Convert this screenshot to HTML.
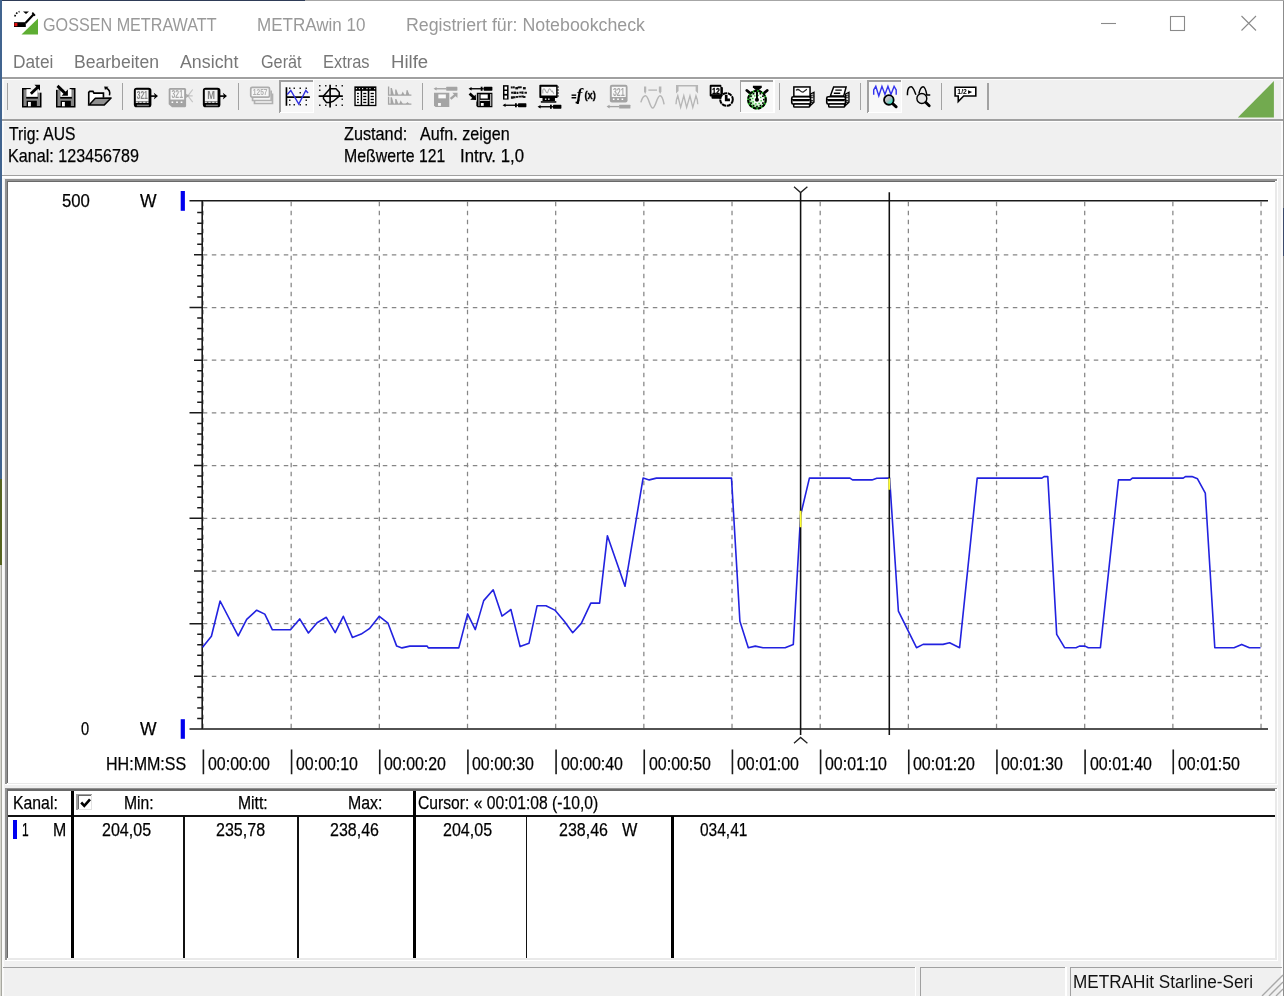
<!DOCTYPE html>
<html><head><meta charset="utf-8"><title>METRAwin 10</title>
<style>
html,body{margin:0;padding:0}
body{width:1284px;height:996px;position:relative;overflow:hidden;background:#f0f0f0;font-family:"Liberation Sans",sans-serif}
.t{position:absolute;white-space:pre;line-height:normal;transform-origin:0 0;font-family:"Liberation Sans",sans-serif}
.ms{filter:blur(0.3px);-webkit-text-stroke:0.25px #000}
.a{position:absolute}
svg{position:absolute;overflow:visible}
</style></head><body>
<div class="a" style="left:2px;top:1px;width:1281px;height:76px;background:#fff;"></div>
<div class="a" style="left:0px;top:0px;width:305px;height:1px;background:#2e3b57;"></div>
<div class="a" style="left:305px;top:0px;width:979px;height:1px;background:#a6a6a6;"></div>
<div class="a" style="left:0px;top:0px;width:2px;height:479px;background:#41648f;"></div>
<div class="a" style="left:0px;top:479px;width:2px;height:86px;background:#56631f;"></div>
<div class="a" style="left:0px;top:565px;width:2px;height:431px;background:#d6d6ce;"></div>
<div class="a" style="left:1.3px;top:565px;width:0.7px;height:431px;background:#a8a8a0;"></div>
<div class="a" style="left:2px;top:77px;width:1.5px;height:919px;background:#fafafa;"></div>
<div class="a" style="left:1282.6px;top:1px;width:1.4px;height:995px;background:#8c8c8c;"></div>
<div class="a" style="left:1283px;top:208px;width:1px;height:48px;background:#3c4a6a;"></div>
<div class="a" style="left:1281.3px;top:77px;width:1.3px;height:919px;background:#fbfbfb;"></div>
<div class="a" style="left:2px;top:77px;width:1280.6px;height:1.5px;background:#a0a0a0;"></div>
<div class="a" style="left:2px;top:78.5px;width:1280.6px;height:1.5px;background:#fff;"></div>
<div class="a" style="left:2px;top:119px;width:1280.6px;height:1.5px;background:#a0a0a0;"></div>
<div class="a" style="left:2px;top:120.5px;width:1280.6px;height:1.5px;background:#fff;"></div>
<div class="a" style="left:2px;top:174.5px;width:1280.6px;height:1.5px;background:#a0a0a0;"></div>
<div class="a" style="left:2px;top:176px;width:1280.6px;height:1.5px;background:#fff;"></div>
<div class="a" style="left:5.3px;top:179.4px;width:1272.7px;height:606.1px;background:#fff;"></div>
<div class="a" style="left:5.3px;top:179.4px;width:1271.3px;height:1.3px;background:#929292;"></div>
<div class="a" style="left:5.3px;top:179.4px;width:1.3px;height:604.7px;background:#929292;"></div>
<div class="a" style="left:6.5px;top:180.6px;width:1268.8px;height:1.4px;background:#696969;"></div>
<div class="a" style="left:6.5px;top:180.6px;width:1.4px;height:602.2px;background:#696969;"></div>
<div class="a" style="left:7.9px;top:782.5px;width:1268.7px;height:1.5px;background:#e9e9e9;"></div>
<div class="a" style="left:1275px;top:182.0px;width:1.5px;height:602.1px;background:#e9e9e9;"></div>
<div class="a" style="left:5.3px;top:788px;width:1272.7px;height:173.20000000000005px;background:#fff;"></div>
<div class="a" style="left:5.3px;top:788px;width:1271.3px;height:1.3px;background:#929292;"></div>
<div class="a" style="left:5.3px;top:788px;width:1.3px;height:171.80000000000004px;background:#929292;"></div>
<div class="a" style="left:6.5px;top:789.2px;width:1268.8px;height:1.4px;background:#696969;"></div>
<div class="a" style="left:6.5px;top:789.2px;width:1.4px;height:169.30000000000004px;background:#696969;"></div>
<div class="a" style="left:7.9px;top:958.2px;width:1268.7px;height:1.5px;background:#e9e9e9;"></div>
<div class="a" style="left:1275px;top:790.6px;width:1.5px;height:169.20000000000005px;background:#e9e9e9;"></div>
<div class="a" style="left:8px;top:815.0px;width:1267.2px;height:1.6px;background:#111;"></div>
<div class="a" style="left:70.5px;top:790.6px;width:3px;height:167.39999999999998px;background:#000;"></div>
<div class="a" style="left:412.7px;top:790.6px;width:3px;height:167.39999999999998px;background:#000;"></div>
<div class="a" style="left:183.39999999999998px;top:816px;width:1.6px;height:142px;background:#111;"></div>
<div class="a" style="left:297.2px;top:816px;width:1.6px;height:142px;background:#111;"></div>
<div class="a" style="left:525.5px;top:816px;width:1.6px;height:142px;background:#111;"></div>
<div class="a" style="left:671.0px;top:816px;width:2.6px;height:142px;background:#000;"></div>
<div class="a" style="left:12.7px;top:820px;width:4px;height:18.6px;background:#0000f0;filter:blur(0.3px)"></div>
<div class="a" style="left:76.3px;top:793.5px;width:15.7px;height:16.7px;background:#fff;"></div>
<div class="a" style="left:76.3px;top:793.5px;width:15.7px;height:1.5px;background:#a0a0a0;"></div>
<div class="a" style="left:76.3px;top:793.5px;width:1.5px;height:16.7px;background:#a0a0a0;"></div>
<div class="a" style="left:77.8px;top:795px;width:14px;height:1.2px;background:#696969;"></div>
<div class="a" style="left:77.8px;top:795px;width:1.2px;height:15px;background:#696969;"></div>
<div class="a" style="left:77.8px;top:808.8px;width:14.2px;height:1.4px;background:#e3e3e3;"></div>
<div class="a" style="left:90.6px;top:795px;width:1.4px;height:15px;background:#e3e3e3;"></div>
<svg style="left:76.5px;top:794.6px;filter:blur(0.3px)" width="16" height="17" viewBox="0 0 16 17"><path d="M4.2 7.5 L7.3 10.8 L13 4.4" fill="none" stroke="#000" stroke-width="2.6"/></svg>
<div class="a" style="left:3px;top:967px;width:911.8px;height:1.4px;background:#a0a0a0;"></div>
<div class="a" style="left:920px;top:967px;width:145px;height:1.4px;background:#a0a0a0;"></div>
<div class="a" style="left:1069.9px;top:967px;width:212.5999999999999px;height:1.4px;background:#a0a0a0;"></div>
<div class="a" style="left:920px;top:967px;width:1.4px;height:29px;background:#a0a0a0;"></div>
<div class="a" style="left:1069.9px;top:967px;width:1.4px;height:29px;background:#a0a0a0;"></div>
<div class="a" style="left:914.8px;top:967px;width:1.6px;height:29px;background:#fff;"></div>
<div class="a" style="left:1065px;top:967px;width:1.6px;height:29px;background:#fff;"></div>
<svg style="left:1258px;top:974px" width="26" height="22" viewBox="0 0 26 22"><g stroke="#a8a8a8" stroke-width="1.4"><path d="M4 22 L25 1 M11 22 L25 8 M18 22 L25 15"/></g></svg>
<svg style="left:1090px;top:8px" width="180" height="32" viewBox="0 0 180 32"><g stroke="#8a8a8a" stroke-width="1.1" fill="none"><path d="M11 15.5 H26"/><rect x="80.5" y="8.5" width="14" height="14"/><path d="M151.5 8 L166 22.5 M166 8 L151.5 22.5"/></g></svg>
<svg style="left:12px;top:8px" width="30" height="30" viewBox="0 0 30 30">
<polygon points="26,10.5 26,26.5 9.5,26.5" fill="#5eae33"/>
<path d="M2.8 8.5 C3.5 5.5 6 4 7.5 3.6" fill="none" stroke="#000" stroke-width="1.6" stroke-dasharray="1.6 1.4"/>
<path d="M11 3.5 H17 L14 6 Z" fill="#000"/>
<path d="M21.5 6.5 L13.5 15" stroke="#000" stroke-width="2.2" fill="none"/>
<path d="M20.3 4.6 L23 7.6" stroke="#000" stroke-width="1.6" fill="none"/>
<rect x="2" y="14.2" width="11.8" height="4.8" fill="#000"/>
<rect x="2.4" y="15" width="3" height="3.2" fill="#e01010"/>
</svg>
<svg style="left:0;top:0" width="1284" height="996" viewBox="0 0 1284 996">
<path d="M202.8 254.80 H1268 M202.8 307.50 H1268 M202.8 360.20 H1268 M202.8 412.90 H1268 M202.8 465.60 H1268 M202.8 518.30 H1268 M202.8 571.00 H1268 M202.8 623.70 H1268 M202.8 676.40 H1268" stroke="#868686" stroke-width="1.25" stroke-dasharray="4.5 4.5" fill="none"/>
<path d="M203.00 201.7 V729.0 M291.17 201.7 V729.0 M379.34 201.7 V729.0 M467.51 201.7 V729.0 M555.68 201.7 V729.0 M643.85 201.7 V729.0 M732.02 201.7 V729.0 M820.19 201.7 V729.0 M908.36 201.7 V729.0 M996.53 201.7 V729.0 M1084.70 201.7 V729.0 M1172.87 201.7 V729.0 M1261.04 201.7 V729.0" stroke="#868686" stroke-width="1.25" stroke-dasharray="4.5 4.5" fill="none"/>
<path d="M189.5 200.8 H1268 M189.5 729.0 H1268 M202.2 200.8 V729.0" stroke="#1a1a1a" stroke-width="1.6" fill="none"/>
<path d="M197.2 212.59 H202.2 M197.2 223.13 H202.2 M197.2 233.67 H202.2 M197.2 244.21 H202.2 M194 254.75 H202.2 M197.2 265.29 H202.2 M197.2 275.83 H202.2 M197.2 286.37 H202.2 M197.2 296.91 H202.2 M189.5 307.45 H202.2 M197.2 317.99 H202.2 M197.2 328.53 H202.2 M197.2 339.07 H202.2 M197.2 349.61 H202.2 M194 360.15 H202.2 M197.2 370.69 H202.2 M197.2 381.23 H202.2 M197.2 391.77 H202.2 M197.2 402.31 H202.2 M189.5 412.85 H202.2 M197.2 423.39 H202.2 M197.2 433.93 H202.2 M197.2 444.47 H202.2 M197.2 455.01 H202.2 M194 465.55 H202.2 M197.2 476.09 H202.2 M197.2 486.63 H202.2 M197.2 497.17 H202.2 M197.2 507.71 H202.2 M189.5 518.25 H202.2 M197.2 528.79 H202.2 M197.2 539.33 H202.2 M197.2 549.87 H202.2 M197.2 560.41 H202.2 M194 570.95 H202.2 M197.2 581.49 H202.2 M197.2 592.03 H202.2 M197.2 602.57 H202.2 M197.2 613.11 H202.2 M189.5 623.65 H202.2 M197.2 634.19 H202.2 M197.2 644.73 H202.2 M197.2 655.27 H202.2 M197.2 665.81 H202.2 M194 676.35 H202.2 M197.2 686.89 H202.2 M197.2 697.43 H202.2 M197.2 707.97 H202.2 M197.2 718.51 H202.2" stroke="#1a1a1a" stroke-width="1.5" fill="none"/>
<path d="M203.40 749.6 V774.2 M291.57 749.6 V774.2 M379.74 749.6 V774.2 M467.91 749.6 V774.2 M556.08 749.6 V774.2 M644.25 749.6 V774.2 M732.42 749.6 V774.2 M820.59 749.6 V774.2 M908.76 749.6 V774.2 M996.93 749.6 V774.2 M1085.10 749.6 V774.2 M1173.27 749.6 V774.2" stroke="#1a1a1a" stroke-width="1.6" fill="none"/>
<rect x="180.7" y="191" width="4.2" height="19.8" fill="#0000ee"/><rect x="180.7" y="719.2" width="4.2" height="19.6" fill="#0000ee"/>
<polyline points="202.6,647.2 211.4,636.3 220.1,601 238.2,635.9 246.7,619.3 256.7,610.2 264.8,614.1 272.4,629.8 290.5,629.8 299.7,618.9 308.4,633 317.1,622.8 326.3,617.3 335.2,632.6 343.3,616.3 352.4,637.4 361.2,634.1 369.4,628.7 379.3,616.3 388,623.2 396.7,646.1 402,647.9 409.8,646.1 427.2,646.1 428.3,647.9 458.8,647.9 467.6,613.9 475.3,629.6 483.7,600.6 493.2,589.8 502,616.1 510.9,609.5 520.1,646.6 529,643.3 537.1,605.7 546,605.7 554.8,610.1 564.3,621.2 572.7,632.7 581.3,623.4 590.8,603.1 599.6,603.1 607.4,535.7 625,586.3 643.1,478.1 649.3,479.9 656.4,478.1 731.5,478.1 739.9,621.2 748.3,647.7 755.3,646.1 763,647.7 785.1,647.7 793.3,644.4 800.6,515.2 809.4,478.1 850,478.1 852.5,479.9 872,479.9 876.8,478.3 889.6,478.1 898.4,611.2 916.5,647.7 923.1,644.4 943,644.4 949.6,642.8 959.6,647.7 977.2,478.1 1041.9,478.1 1044.1,476.6 1047.8,476.6 1056.7,634.4 1064.6,647.7 1076,647.7 1079.4,646.1 1085,646.1 1088.3,647.7 1100.4,647.7 1118.5,479.9 1130.2,479.9 1132.4,478.1 1183.2,478.1 1185.4,476.6 1192,476.6 1197.5,478.8 1205.3,493.1 1214.8,647.7 1234,647.7 1241.7,644.4 1249.4,647.7 1260.5,647.7" fill="none" stroke="#2222e0" stroke-width="1.6" stroke-linejoin="round"/>
<path d="M800.6 192.6 V735 M889.3 192.3 V735" stroke="#111" stroke-width="1.55" fill="none"/>
<path d="M794 186.7 L800.6 192.6 L807.4 186.7 M794 743.2 L800.6 737.4 L807.4 743.2" stroke="#222" stroke-width="1.3" fill="none"/>
<path d="M800.6 510.8 V527.3 M889.3 478.6 V489.8" stroke="#ffff30" stroke-width="1.9" fill="none"/>
</svg>
<div class="a" style="left:6.55px;top:83.4px;width:1.3px;height:26.4px;background:#a2a2a2"></div>
<div class="a" style="left:121.95px;top:83.4px;width:1.3px;height:26.4px;background:#a2a2a2"></div>
<div class="a" style="left:237.65px;top:83.4px;width:1.3px;height:26.4px;background:#a2a2a2"></div>
<div class="a" style="left:421.85px;top:83.4px;width:1.3px;height:26.4px;background:#a2a2a2"></div>
<div class="a" style="left:778.95px;top:83.4px;width:1.3px;height:26.4px;background:#a2a2a2"></div>
<div class="a" style="left:859.95px;top:83.4px;width:1.3px;height:26.4px;background:#a2a2a2"></div>
<div class="a" style="left:940.95px;top:83.4px;width:1.3px;height:26.4px;background:#a2a2a2"></div>
<div class="a" style="left:987.45px;top:83.4px;width:1.3px;height:26.4px;background:#a2a2a2"></div>
<div class="a" style="left:279.80px;top:80.3px;width:34.3px;height:32.5px;background:#f8f8f8"></div>
<div class="a" style="left:279.30px;top:80.2px;width:1.5px;height:32.6px;background:#a0a0a0"></div>
<div class="a" style="left:279.30px;top:80.4px;width:33.5px;height:1.2px;background:#a0a0a0"></div>
<div class="a" style="left:312.80px;top:80.3px;width:1.4px;height:32.6px;background:#fff"></div>
<div class="a" style="left:279.80px;top:111.6px;width:34.3px;height:1.4px;background:#fff"></div>
<div class="a" style="left:867.80px;top:80.3px;width:34.3px;height:32.5px;background:#f8f8f8"></div>
<div class="a" style="left:867.30px;top:80.2px;width:1.5px;height:32.6px;background:#a0a0a0"></div>
<div class="a" style="left:867.30px;top:80.4px;width:33.5px;height:1.2px;background:#a0a0a0"></div>
<div class="a" style="left:900.80px;top:80.3px;width:1.4px;height:32.6px;background:#fff"></div>
<div class="a" style="left:867.80px;top:111.6px;width:34.3px;height:1.4px;background:#fff"></div>
<div class="a" style="left:740.30px;top:80.3px;width:34.3px;height:32.5px;background:#f8f8f8"></div>
<div class="a" style="left:739.80px;top:80.2px;width:1.5px;height:32.6px;background:#a0a0a0"></div>
<div class="a" style="left:739.80px;top:80.4px;width:33.5px;height:1.2px;background:#a0a0a0"></div>
<div class="a" style="left:773.30px;top:80.3px;width:1.4px;height:32.6px;background:#fff"></div>
<div class="a" style="left:740.30px;top:111.6px;width:34.3px;height:1.4px;background:#fff"></div>
<svg style="left:1230px;top:78px" width="50" height="42" viewBox="0 0 50 42"><polygon points="7.8,39.4 43.9,39.4 43.9,3" fill="#72aa4f"/></svg>
<svg style="left:18.80px;top:84.50px;filter:blur(0.35px)" width="24" height="22.5" viewBox="0 0 16 15"><rect x="2" y="2" width="13" height="13" fill="#000"/><rect x="3" y="3" width="11" height="11" fill="#858585"/><rect x="5" y="2.8" width="7.3" height="5.2" fill="#fff"/><rect x="4.8" y="7.9" width="7.8" height="1.2" fill="#000"/><rect x="5.1" y="10.5" width="6.8" height="3.8" fill="#000"/><rect x="6" y="11.3" width="1.9" height="2.9" fill="#fff"/><rect x="7.8" y="1.5" width="8" height="1.4" fill="#f0f0f0"/><rect x="12.4" y="1.5" width="3" height="3.6" fill="#f0f0f0"/><path d="M7.9 5.9 L12.3 1.6" stroke="#000" stroke-width="1.9"/><polygon points="14,-0.1 10.3,-0.1 14,3.9" fill="#000"/></svg>
<svg style="left:53.30px;top:84.50px;filter:blur(0.35px)" width="24" height="22.5" viewBox="0 0 16 15"><rect x="2" y="2" width="13" height="13" fill="#000"/><rect x="3" y="3" width="11" height="11" fill="#858585"/><rect x="5" y="2.8" width="7.3" height="5.2" fill="#fff"/><rect x="4.8" y="7.9" width="7.8" height="1.2" fill="#000"/><rect x="5.1" y="10.5" width="6.8" height="3.8" fill="#000"/><rect x="6" y="11.3" width="1.9" height="2.9" fill="#fff"/><rect x="1.5" y="1.5" width="9.6" height="1.5" fill="#f0f0f0"/><rect x="1.5" y="1.5" width="2" height="1.6" fill="#f0f0f0"/><path d="M3 0.6 L8 5.4" stroke="#000" stroke-width="1.9"/><polygon points="9.9,7.1 5.7,7.1 9.9,3" fill="#000"/></svg>
<svg style="left:87.80px;top:84.50px;filter:blur(0.35px)" width="24" height="22.5" viewBox="0 0 16 15"><polygon points="0.5,4.6 3.5,4.6 4.1,5.6 10.3,5.6 10.3,8.8 4.7,8.9 0.5,13" fill="#fff"/><path d="M0.5 13.2 V4.9 L1.2 4.2 H3.3 L4 5.4 H10.3 V8.5" fill="none" stroke="#000" stroke-width="1.1"/><polygon points="1.2,12.9 4.9,8.9 15.4,8.7 10.7,13.4 0.3,13.4" fill="#909090" stroke="#000" stroke-width="1" stroke-linejoin="round"/><path d="M14.3 6.9 C14.9 4.6 13.8 2.9 12.2 2.2" fill="none" stroke="#000" stroke-width="1"/><polygon points="10.8,1 13.7,1.2 11.3,3.4" fill="#000"/></svg>
<svg style="left:134.30px;top:84.50px;filter:blur(0.35px)" width="24" height="22.5" viewBox="0 0 16 15"><rect x="-0.1" y="1.9" width="11.7" height="13" rx="1.9" fill="#000"/><rect x="1.2" y="3.2" width="8.5" height="7.6" fill="#f4f4f4"/><text x="5.5" y="9.4" font-family="Liberation Sans,sans-serif" font-size="7.2" text-anchor="middle" font-weight="bold" fill="#868686" textLength="7.4" lengthAdjust="spacingAndGlyphs">321</text><rect x="1.2" y="10.9" width="8.5" height="1.1" fill="#d8d8d8"/><rect x="2.6" y="11.1" width="1" height="0.8" fill="#555"/><rect x="5.1" y="11.1" width="1" height="0.8" fill="#555"/><rect x="7.6" y="11.1" width="1" height="0.8" fill="#555"/><rect x="1.9" y="13.1" width="8" height="1" fill="#777"/><path d="M11.2 7.4 H15" stroke="#000" stroke-width="1.1"/><polygon points="13.2,5.2 16,7.4 13.2,9.6 14,7.4" fill="#000"/></svg>
<svg style="left:168.80px;top:84.50px;filter:blur(0.35px)" width="24" height="22.5" viewBox="0 0 16 15"><path d="M1.2 2 H10.4 Q11.4 2 11.4 3 V13.9 Q11.4 14.9 10.4 14.9 H2 L-0.2 12.8 V3 Q-0.2 2 0.8 2 Z" fill="#a4a4a4"/><rect x="1" y="3.2" width="9.1" height="6.5" fill="#f8f8f8"/><text x="5.5" y="8.9" font-family="Liberation Sans,sans-serif" font-size="7" text-anchor="middle" font-weight="bold" fill="#a8a8a8" textLength="7.6" lengthAdjust="spacingAndGlyphs">321</text><rect x="1.7" y="11" width="1.1" height="1" fill="#fff"/><rect x="4.8" y="11" width="1.1" height="1" fill="#fff"/><rect x="7.8" y="11" width="1.1" height="1" fill="#fff"/><path d="M15.8 3 L12.6 7.2 L15.8 11.4 M12.6 7.2 H15.8" stroke="#c4c4c4" stroke-width="0.8" fill="none"/><polygon points="11.4,5.8 13.5,7.2 11.4,8.6" fill="#a8a8a8"/></svg>
<svg style="left:203.30px;top:84.50px;filter:blur(0.35px)" width="24" height="22.5" viewBox="0 0 16 15"><rect x="-0.1" y="1.9" width="11.7" height="13" rx="1.9" fill="#000"/><rect x="1.2" y="3.2" width="8.5" height="7.6" fill="#f4f4f4"/><text x="5.5" y="9.4" font-family="Liberation Sans,sans-serif" font-size="7.6" text-anchor="middle" font-weight="bold" fill="#868686" textLength="5.2" lengthAdjust="spacingAndGlyphs">M</text><rect x="1.2" y="10.9" width="8.5" height="1.1" fill="#d8d8d8"/><rect x="2.6" y="11.1" width="1" height="0.8" fill="#555"/><rect x="5.1" y="11.1" width="1" height="0.8" fill="#555"/><rect x="7.6" y="11.1" width="1" height="0.8" fill="#555"/><rect x="1.9" y="13.1" width="8" height="1" fill="#777"/><path d="M11.2 7.4 H15" stroke="#000" stroke-width="1.1"/><polygon points="13.2,5.2 16,7.4 13.2,9.6 14,7.4" fill="#000"/></svg>
<svg style="left:249.80px;top:84.50px;filter:blur(0.35px)" width="24" height="22.5" viewBox="0 0 16 15"><path d="M3 9.6 V12.3 H15 V5.6" stroke="#b0b0b0" stroke-width="1.1" fill="#f4f4f4"/><path d="M1.7 8.4 V10.3 H14.1 V3.6" stroke="#b0b0b0" stroke-width="1.1" fill="#f4f4f4"/><rect x="0.5" y="1.6" width="12.5" height="6.5" rx="0.9" fill="#f6f6f6" stroke="#acacac" stroke-width="1.15"/><text x="6.8" y="6.8" font-family="Liberation Sans,sans-serif" font-weight="bold" font-size="5.6" text-anchor="middle" fill="#b0b0b0" textLength="9.8" lengthAdjust="spacingAndGlyphs">1257</text></svg>
<svg style="left:285.80px;top:86.00px;filter:blur(0.35px)" width="24" height="22.5" viewBox="0 0 16 15"><rect x="2" y="1" width="1" height="1" fill="#222"/><rect x="5" y="1" width="1" height="1" fill="#222"/><rect x="9" y="1" width="1" height="1" fill="#222"/><rect x="13" y="1" width="1" height="1" fill="#222"/><rect x="9" y="4" width="1" height="1" fill="#222"/><rect x="2" y="9" width="1" height="1" fill="#222"/><rect x="13" y="9" width="1" height="1" fill="#222"/><rect x="2" y="12" width="1" height="1" fill="#222"/><rect x="5" y="12" width="1" height="1" fill="#222"/><rect x="9" y="12" width="1" height="1" fill="#222"/><rect x="13" y="12" width="1" height="1" fill="#222"/><path d="M0.3 0.9 V13.1 M0 7.4 H15.9" stroke="#000" stroke-width="1.1" fill="none"/><polyline points="0.8,5.6 3.2,3 8.5,12 13.2,3 14.7,4.7" fill="none" stroke="#3030e0" stroke-width="0.95"/></svg>
<svg style="left:318.80px;top:84.50px;filter:blur(0.35px)" width="24" height="22.5" viewBox="0 0 16 15"><rect x="0" y="0" width="1" height="1" fill="#222"/><rect x="4" y="0" width="1" height="1" fill="#222"/><rect x="11" y="0" width="1" height="1" fill="#222"/><rect x="15" y="0" width="1" height="1" fill="#222"/><rect x="0" y="3" width="1" height="1" fill="#222"/><rect x="15" y="9" width="1" height="1" fill="#222"/><rect x="0" y="13" width="1" height="1" fill="#222"/><rect x="4" y="13" width="1" height="1" fill="#222"/><rect x="11" y="13" width="1" height="1" fill="#222"/><rect x="15" y="13" width="1" height="1" fill="#222"/><path d="M7.4 -0.2 V15 M-0.2 7.4 H15.9" stroke="#000" stroke-width="1.1" fill="none"/><polygon points="3,7.4 7.3,2.5 11.3,2.5 13.5,4.8 13.5,7.4 9.6,10.8 7.3,11.6 5,11.6 3,9.2" fill="none" stroke="#000" stroke-width="1"/></svg>
<svg style="left:353.30px;top:84.50px;filter:blur(0.35px)" width="24" height="22.5" viewBox="0 0 16 15"><rect x="0.9" y="0.9" width="14.7" height="13.2" fill="#000"/><rect x="1.8" y="3.9" width="3.3" height="9.3" fill="#fff"/><rect x="6.1" y="3.9" width="3.7" height="9.3" fill="#fff"/><rect x="10.9" y="3.9" width="3.9" height="9.3" fill="#fff"/><rect x="1.9" y="2" width="0.8" height="0.8" fill="#ddd"/><rect x="3.9" y="2" width="0.8" height="0.8" fill="#ddd"/><rect x="6" y="2" width="0.8" height="0.8" fill="#ddd"/><rect x="8.9" y="2" width="0.8" height="0.8" fill="#ddd"/><rect x="10.9" y="2" width="0.8" height="0.8" fill="#ddd"/><rect x="14" y="2" width="0.8" height="0.8" fill="#ddd"/><rect x="2.7" y="5.2" width="1.2" height="0.9" fill="#000"/><rect x="6.8" y="5.2" width="2.1" height="0.9" fill="#000"/><rect x="11.7" y="5.2" width="2.2" height="0.9" fill="#000"/><rect x="2.7" y="7.2" width="1.2" height="0.9" fill="#000"/><rect x="6.8" y="7.2" width="2.1" height="0.9" fill="#000"/><rect x="11.7" y="7.2" width="2.2" height="0.9" fill="#000"/><rect x="2.7" y="9.2" width="1.2" height="0.9" fill="#000"/><rect x="6.8" y="9.2" width="2.1" height="0.9" fill="#000"/><rect x="11.7" y="9.2" width="2.2" height="0.9" fill="#000"/><rect x="2.7" y="11.2" width="1.2" height="0.9" fill="#000"/><rect x="6.8" y="11.2" width="2.1" height="0.9" fill="#000"/><rect x="11.7" y="11.2" width="2.2" height="0.9" fill="#000"/></svg>
<svg style="left:387.80px;top:84.50px;filter:blur(0.35px)" width="24" height="22.5" viewBox="0 0 16 15"><path d="M0.4 1 V6.7 H15.6 M0.4 7.9 V12.7 H15.6" stroke="#a4a4a4" stroke-width="0.9" fill="none"/><g fill="#a4a4a4"><polygon points="1.7,6.6 1.7,2 2.6,2 3.9,6.6"/><polygon points="4.8,6.6 4.8,3 5.6,3 6.9,6.6"/><polygon points="8.8,6.6 9.8,4.4 11,6.6"/><polygon points="11.9,6.6 12.4,3.4 13,3.4 14.3,6.6"/><polygon points="1.7,12.6 1.7,8.2 2.6,8.2 3.9,12.6"/><polygon points="4.8,12.6 4.8,9.4 5.6,9.4 6.9,12.6"/><polygon points="7.6,12.6 8.4,10.2 9.9,12.6"/><polygon points="11.8,12.6 13,11.4 14.2,12.6"/></g></svg>
<svg style="left:434.30px;top:84.50px;filter:blur(0.35px)" width="24" height="22.5" viewBox="0 0 16 15"><rect x="8.1" y="1.2" width="7.5" height="2.6" rx="0.4" fill="#a4a4a4"/><path d="M1 2.5 H8.1" stroke="#a4a4a4" stroke-width="0.9"/><polygon points="-0.3,2.5 1.7,1.3 1.7,3.7" fill="#a4a4a4"/><path d="M0 5.1 H10.2 V14.6 H1 L0 13.6 Z" fill="#a4a4a4"/><rect x="2.9" y="6.3" width="5" height="2.6" fill="#fafafa"/><rect x="2.7" y="12" width="1.9" height="1.9" fill="#fafafa"/><path d="M11.1 9.3 L14.4 6.4" stroke="#a4a4a4" stroke-width="1.6"/><polygon points="15.7,5.1 12.2,5.2 15.6,8.7" fill="#a4a4a4"/></svg>
<svg style="left:468.80px;top:84.50px;filter:blur(0.35px)" width="24" height="22.5" viewBox="0 0 16 15"><rect x="9.8" y="1.2" width="5.799999999999999" height="2.6" rx="0.4" fill="#000"/><rect x="7.800000000000001" y="1.15" width="1.2" height="2.7" fill="#000"/><path d="M1 2.5 H9.8" stroke="#000" stroke-width="0.9"/><polygon points="-0.3,2.5 1.7,1.3 1.7,3.7" fill="#000"/><path d="M0.4 5.6 L3.4 8.5" stroke="#000" stroke-width="1.9"/><polygon points="4.7,10 0.8,9.8 4.5,6.3" fill="#000"/><path d="M5.2 5.1 H15.6 V14.9 H5.8 L4.9 14 V11 H5.2 Z" fill="#000"/><rect x="6.1" y="6" width="1" height="8" fill="#8a8a8a"/><rect x="14" y="6" width="0.9" height="8" fill="#b0b0b0"/><rect x="7.7" y="6.3" width="4.8" height="2.7" fill="#fff"/><rect x="7.2" y="9.9" width="6.6" height="0.7" fill="#ddd"/><rect x="7.9" y="12" width="1.9" height="1.9" fill="#fff"/></svg>
<svg style="left:503.30px;top:84.50px;filter:blur(0.35px)" width="24" height="22.5" viewBox="0 0 16 15"><rect x="0" y="0.1" width="3.7" height="9.6" fill="#000"/><rect x="1" y="1.1" width="1.7" height="1.9" fill="#fff"/><rect x="1" y="4" width="1.7" height="1.9" fill="#fff"/><rect x="1" y="7.1" width="1.7" height="1.9" fill="#fff"/><rect x="5.2" y="0.94" width="1.28" height="1.34" fill="#111"/><rect x="6.6" y="0.89" width="1.25" height="1.34" fill="#111"/><rect x="8.2" y="1.35" width="1.84" height="1.56" fill="#111"/><rect x="9.8" y="0.93" width="1.63" height="1.27" fill="#111"/><rect x="11.2" y="0.90" width="1.28" height="1.23" fill="#111"/><rect x="13.3" y="1.36" width="1.86" height="1.58" fill="#111"/><rect x="5.4" y="4.48" width="1.35" height="1.29" fill="#111"/><rect x="6.9" y="4.38" width="1.79" height="1.61" fill="#111"/><rect x="9" y="4.53" width="1.27" height="1.46" fill="#111"/><rect x="10.9" y="4.40" width="1.60" height="1.21" fill="#111"/><rect x="12.4" y="4.28" width="1.27" height="1.66" fill="#111"/><rect x="14.3" y="4.52" width="1.64" height="1.28" fill="#111"/><rect x="5.3" y="7.55" width="1.66" height="1.63" fill="#111"/><rect x="6.7" y="7.51" width="1.61" height="1.35" fill="#111"/><rect x="8.5" y="7.36" width="1.54" height="1.20" fill="#111"/><rect x="10.3" y="7.18" width="1.85" height="1.13" fill="#111"/><rect x="12.2" y="7.03" width="1.70" height="1.27" fill="#111"/><rect x="13.4" y="7.32" width="1.58" height="1.31" fill="#111"/><rect x="10" y="12.2" width="5.6" height="2.6" rx="0.4" fill="#000"/><rect x="8" y="12.15" width="1.2" height="2.7" fill="#000"/><path d="M1 13.5 H10" stroke="#000" stroke-width="0.9"/><polygon points="-0.3,13.5 1.7,12.3 1.7,14.7" fill="#000"/></svg>
<svg style="left:537.80px;top:84.50px;filter:blur(0.35px)" width="24" height="22.5" viewBox="0 0 16 15"><rect x="0.9" y="-0.1" width="12.2" height="8.8" rx="0.5" fill="#000"/><rect x="13" y="0.8" width="0.7" height="1.1" fill="#000"/><rect x="13" y="2.8" width="0.7" height="1.1" fill="#000"/><rect x="13" y="4.8" width="0.7" height="1.1" fill="#000"/><rect x="13" y="6.8" width="0.7" height="1.1" fill="#000"/><rect x="2.2" y="1.2" width="9.9" height="5.8" fill="#fafafa"/><path d="M3.2 5.6 V3.5 Q4 1.6 4.8 3.5 T6.4 5.2 Q7.4 1.2 8.4 3.2 T9.6 4.2 L10.6 5.8" fill="none" stroke="#a8a8a8" stroke-width="0.7"/><rect x="3" y="8.6" width="8.3" height="2.1" fill="#000"/><rect x="4.6" y="9" width="1" height="0.9" fill="#eee"/><rect x="6.7" y="9" width="1" height="0.9" fill="#eee"/><rect x="1.9" y="10.8" width="10.3" height="1" fill="#000"/><rect x="10" y="13.2" width="5.6" height="2.6" rx="0.4" fill="#000"/><rect x="8" y="13.15" width="1.2" height="2.7" fill="#000"/><path d="M1 14.5 H10" stroke="#000" stroke-width="0.9"/><polygon points="-0.3,14.5 1.7,13.3 1.7,15.7" fill="#000"/></svg>
<svg style="left:572.30px;top:84.50px;filter:blur(0.35px)" width="24" height="22.5" viewBox="0 0 16 15"><rect x="-0.3" y="6.3" width="3.1" height="0.95" fill="#000"/><rect x="-0.3" y="8" width="3.1" height="1" fill="#000"/><text x="3" y="9.9" font-family="Liberation Serif,serif" font-style="italic" font-weight="bold" font-size="11.5" fill="#000">f</text><path d="M4.6 9.5 Q4.2 12 2.4 11.6" fill="none" stroke="#000" stroke-width="1.1"/><text x="8.3" y="9.6" font-family="Liberation Sans,sans-serif" font-weight="bold" font-size="7.8" fill="#000" stroke="#000" stroke-width="0.25" textLength="7.6" lengthAdjust="spacingAndGlyphs">(x)</text></svg>
<svg style="left:606.80px;top:84.50px;filter:blur(0.35px)" width="24" height="22.5" viewBox="0 0 16 15"><rect x="1.9" y="-0.1" width="11.8" height="11.8" rx="1.4" fill="#a4a4a4"/><rect x="3.2" y="1.2" width="9.3" height="6.8" fill="#f8f8f8"/><text x="7.85" y="7.1" font-family="Liberation Sans,sans-serif" font-size="7.2" text-anchor="middle" font-weight="bold" fill="#a4a4a4" textLength="7.8" lengthAdjust="spacingAndGlyphs">321</text><rect x="3.9" y="9" width="1.1" height="1" fill="#fff"/><rect x="6.8" y="9" width="1.1" height="1" fill="#fff"/><rect x="9.7" y="9" width="1.1" height="1" fill="#fff"/><rect x="8.1" y="13.1" width="7.5" height="2.6" rx="0.4" fill="#a4a4a4"/><path d="M1 14.4 H8.1" stroke="#a4a4a4" stroke-width="0.9"/><polygon points="-0.3,14.4 1.7,13.200000000000001 1.7,15.6" fill="#a4a4a4"/></svg>
<svg style="left:641.30px;top:84.50px;filter:blur(0.35px)" width="24" height="22.5" viewBox="0 0 16 15"><g fill="#b6b6b6"><polygon points="2,1 3.5,1 3.5,4.4 2.8,6 2,4.4"/><polygon points="11.9,1 13.6,1 13.6,4.4 12.8,6 11.9,4.4"/></g><path d="M4.9 3.4 H10.7" stroke="#b6b6b6" stroke-width="0.9"/><path d="M-0.1 11.6 C0.8 8.5 1.8 7.2 3 7.2 C5 7.2 6 15.4 7.8 15.4 C9.6 15.4 10.7 7.2 12.7 7.2 C13.8 7.2 14.7 9.3 15.4 12.9" fill="none" stroke="#b6b6b6" stroke-width="1"/></svg>
<svg style="left:675.80px;top:84.50px;filter:blur(0.35px)" width="24" height="22.5" viewBox="0 0 16 15"><polygon points="0,0 14.7,0 14.7,5.6 13.1,4 13.1,1 1.7,1 1.7,4 0,5.6" fill="#b6b6b6"/><polyline points="0,12.8 0.3,10 1.2,7.2 3.1,14.9 5.2,7.2 7.1,14.9 9.3,7.2 11.2,14.9 13.3,7.2 14.2,10 14.5,12.8" fill="none" stroke="#b6b6b6" stroke-width="0.9"/></svg>
<svg style="left:710.30px;top:84.50px;filter:blur(0.35px)" width="24" height="22.5" viewBox="0 0 16 15"><rect x="-0.2" y="-0.1" width="7.8" height="7.7" rx="0.6" fill="#000"/><rect x="1" y="1.4" width="7.6" height="7.7" rx="0.6" fill="#000"/><rect x="1" y="1.2" width="5.9" height="4.9" fill="#fff"/><text x="3.95" y="5.8" font-family="Liberation Sans,sans-serif" font-weight="bold" font-size="6" text-anchor="middle" fill="#000" stroke="#000" stroke-width="0.25" textLength="5" lengthAdjust="spacingAndGlyphs">12</text><circle cx="11" cy="9.7" r="4.2" fill="#fff" stroke="#000" stroke-width="1.35" stroke-dasharray="2.9 0.45"/><path d="M10.8 6.7 V9.9 H13.3" fill="none" stroke="#000" stroke-width="1.8"/></svg>
<svg style="left:746.30px;top:86.00px;filter:blur(0.35px)" width="24" height="22.5" viewBox="0 0 16 15"><defs><radialGradient id="dg" cx="0.58" cy="0.45" r="0.62"><stop offset="0" stop-color="#ffffff"/><stop offset="0.5" stop-color="#eefaee"/><stop offset="0.8" stop-color="#8fdc8f"/><stop offset="1" stop-color="#2fb52f"/></radialGradient></defs><polygon points="4.6,-0.1 10.5,-0.1 10.5,0.9 9.2,2.3 6,2.3 4.6,0.9" fill="#000"/><rect x="6.3" y="2" width="2.4" height="1.9" fill="#000"/><path d="M0.6 3 L3 5 M14.1 3 L11.7 5" stroke="#000" stroke-width="1.9" stroke-linecap="round"/><circle cx="7.3" cy="9.1" r="5.9" fill="url(#dg)" stroke="#1fae1f" stroke-width="1.3"/><circle cx="7.3" cy="9.1" r="5.9" fill="none" stroke="#000" stroke-width="1.3" stroke-dasharray="2.2 1"/><rect x="6.75" y="3.95" width="1.1" height="1.1" fill="#000"/><rect x="9.05" y="4.57" width="1.1" height="1.1" fill="#000"/><rect x="10.73" y="6.25" width="1.1" height="1.1" fill="#000"/><rect x="11.35" y="8.55" width="1.1" height="1.1" fill="#000"/><rect x="10.73" y="10.85" width="1.1" height="1.1" fill="#000"/><rect x="9.05" y="12.53" width="1.1" height="1.1" fill="#000"/><rect x="6.75" y="13.15" width="1.1" height="1.1" fill="#000"/><rect x="4.45" y="12.53" width="1.1" height="1.1" fill="#000"/><rect x="2.77" y="10.85" width="1.1" height="1.1" fill="#000"/><rect x="2.15" y="8.55" width="1.1" height="1.1" fill="#000"/><rect x="2.77" y="6.25" width="1.1" height="1.1" fill="#000"/><rect x="4.45" y="4.57" width="1.1" height="1.1" fill="#000"/><rect x="7.60" y="5.85" width="0.9" height="0.9" fill="#35bb35"/><rect x="9.36" y="7.20" width="0.9" height="0.9" fill="#35bb35"/><rect x="9.65" y="9.40" width="0.9" height="0.9" fill="#35bb35"/><rect x="8.30" y="11.16" width="0.9" height="0.9" fill="#35bb35"/><rect x="6.10" y="11.45" width="0.9" height="0.9" fill="#35bb35"/><rect x="4.34" y="10.10" width="0.9" height="0.9" fill="#35bb35"/><rect x="4.05" y="7.90" width="0.9" height="0.9" fill="#35bb35"/><rect x="5.40" y="6.14" width="0.9" height="0.9" fill="#35bb35"/><path d="M7.3 3.8 V9" stroke="#000" stroke-width="1.3"/><circle cx="7.3" cy="9.2" r="1.35" fill="#000"/></svg>
<svg style="left:791.30px;top:84.50px;filter:blur(0.35px)" width="24" height="22.5" viewBox="0 0 16 15"><path d="M13 6 L15.3 4.9 V11.5 L13 13.6 Z" fill="#fff" stroke="#000" stroke-width="0.9"/><circle cx="14.2" cy="7.6" r="0.9" fill="#bbb" stroke="#000" stroke-width="0.6"/><circle cx="14.1" cy="11" r="0.8" fill="#bbb" stroke="#000" stroke-width="0.6"/><rect x="0.5" y="7.8" width="12.5" height="4.9" rx="1" fill="#fff" stroke="#000" stroke-width="1.1"/><path d="M0.6 9.7 H13 M1.2 10.4 H12.4" stroke="#000" stroke-width="0.8"/><rect x="1.8" y="12.7" width="10.6" height="2" rx="0.6" fill="#fff" stroke="#000" stroke-width="1"/><rect x="1.9" y="1.3" width="10.8" height="6.3" fill="#fff" stroke="#000" stroke-width="1"/><path d="M3.3 3.6 Q4.6 2.4 5.8 3.6 T8 4.8 L10.6 2.9" fill="none" stroke="#222" stroke-width="0.8"/></svg>
<svg style="left:825.80px;top:84.50px;filter:blur(0.35px)" width="24" height="22.5" viewBox="0 0 16 15"><path d="M13 6 L15.3 4.9 V11.5 L13 13.6 Z" fill="#fff" stroke="#000" stroke-width="0.9"/><circle cx="14.2" cy="7.6" r="0.9" fill="#bbb" stroke="#000" stroke-width="0.6"/><circle cx="14.1" cy="11" r="0.8" fill="#bbb" stroke="#000" stroke-width="0.6"/><rect x="0.5" y="7.8" width="12.5" height="4.9" rx="1" fill="#fff" stroke="#000" stroke-width="1.1"/><path d="M0.6 9.7 H13 M1.2 10.4 H12.4" stroke="#000" stroke-width="0.8"/><rect x="1.8" y="12.7" width="10.6" height="2" rx="0.6" fill="#fff" stroke="#000" stroke-width="1"/><polygon points="5.1,1.3 13.4,1.3 11.8,7.4 2.9,7.4" fill="#fff" stroke="#000" stroke-width="1"/><path d="M6.2 3.4 H10.5 M5.2 5.5 H9.5" stroke="#000" stroke-width="0.9"/></svg>
<svg style="left:873.80px;top:86.00px;filter:blur(0.35px)" width="24" height="22.5" viewBox="0 0 16 15"><defs><linearGradient id="mg" x1="0" y1="0" x2="1" y2="1"><stop offset="0" stop-color="#e8e8e8"/><stop offset="0.45" stop-color="#b8bcc0"/><stop offset="0.8" stop-color="#38e0c0"/><stop offset="1" stop-color="#70e8d0"/></linearGradient></defs><polyline points="-0.2,5.8 -0.2,2.6 1.2,0.2 3.2,6.6 5.3,0.2 7.3,5.6 9.3,0.2 11.3,5.6 13.4,0.2 14.8,2.6 14.8,5.8" fill="none" stroke="#3434ee" stroke-width="0.95"/><circle cx="9.9" cy="9.3" r="3.2" fill="url(#mg)" stroke="#000" stroke-width="1.2"/><path d="M12.6 11.9 L14.8 13.9" stroke="#000" stroke-width="1.9" stroke-linecap="round"/></svg>
<svg style="left:906.80px;top:84.50px;filter:blur(0.35px)" width="24" height="22.5" viewBox="0 0 16 15"><path d="M0.3 6.9 V5.4 C0.4 2.6 1.4 1.2 2.7 1.2 C4.3 1.2 4.9 4.2 6 6.5 M7.9 5.8 C8.6 3 9.5 1.2 10.7 1.2 C12 1.2 12.6 3.4 13.2 6.6 M12.8 6.6 H15.5" fill="none" stroke="#000" stroke-width="1"/><circle cx="9.9" cy="9" r="3.3" fill="#e6e6e6" stroke="#000" stroke-width="0.95"/><path d="M12.6 11.7 L14.8 13.8" stroke="#000" stroke-width="1.9" stroke-linecap="round"/></svg>
<svg style="left:953.30px;top:84.50px;filter:blur(0.35px)" width="24" height="22.5" viewBox="0 0 16 15"><path d="M1.4 1.5 H15.2 V7.3 H7.1 L3.5 11 V7.3 H1.4 Z" fill="#fff" stroke="#000" stroke-width="1.05"/><text x="8.3" y="6" font-family="Liberation Sans,sans-serif" font-weight="bold" font-size="4.4" text-anchor="middle" fill="#000" textLength="10.8" lengthAdjust="spacingAndGlyphs">1/2&#9658;</text></svg>
<span class="t " style="left:43.40px;top:14.14px;font-size:18.3px;color:#999;transform:scaleX(0.8839)">GOSSEN METRAWATT</span>
<span class="t " style="left:257.07px;top:14.14px;font-size:18.3px;color:#999;transform:scaleX(0.9304)">METRAwin 10</span>
<span class="t " style="left:405.83px;top:14.14px;font-size:18.3px;color:#999;transform:scaleX(0.9717)">Registriert für: Notebookcheck</span>
<span class="t " style="left:12.75px;top:50.94px;font-size:18.3px;color:#777;transform:scaleX(0.9455)">Datei</span>
<span class="t " style="left:73.74px;top:50.94px;font-size:18.3px;color:#777;transform:scaleX(0.9611)">Bearbeiten</span>
<span class="t " style="left:179.90px;top:50.94px;font-size:18.3px;color:#777;transform:scaleX(0.9738)">Ansicht</span>
<span class="t " style="left:261.10px;top:50.94px;font-size:18.3px;color:#777;transform:scaleX(0.8873)">Gerät</span>
<span class="t " style="left:323.00px;top:50.94px;font-size:18.3px;color:#777;transform:scaleX(0.8980)">Extras</span>
<span class="t " style="left:390.68px;top:50.94px;font-size:18.3px;color:#777;transform:scaleX(1.0168)">Hilfe</span>
<span class="t ms" style="left:9.30px;top:122.61px;font-size:19px;color:#000;transform:scaleX(0.8238)">Trig: AUS</span>
<span class="t ms" style="left:8.15px;top:145.21px;font-size:19px;color:#000;transform:scaleX(0.8488)">Kanal: 123456789</span>
<span class="t ms" style="left:343.90px;top:122.61px;font-size:19px;color:#000;transform:scaleX(0.8548)">Zustand:</span>
<span class="t ms" style="left:420.40px;top:122.61px;font-size:19px;color:#000;transform:scaleX(0.8490)">Aufn. zeigen</span>
<span class="t ms" style="left:344.17px;top:145.21px;font-size:19px;color:#000;transform:scaleX(0.8348)">Meßwerte</span>
<span class="t ms" style="left:419.47px;top:145.21px;font-size:19px;color:#000;transform:scaleX(0.8263)">121</span>
<span class="t ms" style="left:459.52px;top:145.21px;font-size:19px;color:#000;transform:scaleX(0.8824)">Intrv. 1,0</span>
<span class="t ms" style="left:62.30px;top:190.41px;font-size:19px;color:#000;transform:scaleX(0.8801)">500</span>
<span class="t ms" style="left:140.10px;top:190.41px;font-size:19px;color:#000;transform:scaleX(0.9222)">W</span>
<span class="t ms" style="left:81.20px;top:718.40px;font-size:19px;color:#000;transform:scaleX(0.7700)">0</span>
<span class="t ms" style="left:140.10px;top:718.40px;font-size:19px;color:#000;transform:scaleX(0.9222)">W</span>
<span class="t ms" style="left:105.66px;top:752.60px;font-size:19px;color:#000;transform:scaleX(0.8443)">HH:MM:SS</span>
<span class="t ms" style="left:207.90px;top:752.60px;font-size:19px;color:#000;transform:scaleX(0.8380)">00:00:00</span>
<span class="t ms" style="left:296.07px;top:752.60px;font-size:19px;color:#000;transform:scaleX(0.8380)">00:00:10</span>
<span class="t ms" style="left:384.24px;top:752.60px;font-size:19px;color:#000;transform:scaleX(0.8380)">00:00:20</span>
<span class="t ms" style="left:472.41px;top:752.60px;font-size:19px;color:#000;transform:scaleX(0.8380)">00:00:30</span>
<span class="t ms" style="left:560.58px;top:752.60px;font-size:19px;color:#000;transform:scaleX(0.8380)">00:00:40</span>
<span class="t ms" style="left:648.75px;top:752.60px;font-size:19px;color:#000;transform:scaleX(0.8380)">00:00:50</span>
<span class="t ms" style="left:736.92px;top:752.60px;font-size:19px;color:#000;transform:scaleX(0.8380)">00:01:00</span>
<span class="t ms" style="left:825.09px;top:752.60px;font-size:19px;color:#000;transform:scaleX(0.8380)">00:01:10</span>
<span class="t ms" style="left:913.26px;top:752.60px;font-size:19px;color:#000;transform:scaleX(0.8380)">00:01:20</span>
<span class="t ms" style="left:1001.43px;top:752.60px;font-size:19px;color:#000;transform:scaleX(0.8380)">00:01:30</span>
<span class="t ms" style="left:1089.60px;top:752.60px;font-size:19px;color:#000;transform:scaleX(0.8380)">00:01:40</span>
<span class="t ms" style="left:1177.77px;top:752.60px;font-size:19px;color:#000;transform:scaleX(0.8380)">00:01:50</span>
<span class="t ms" style="left:12.57px;top:792.10px;font-size:19px;color:#000;transform:scaleX(0.8315)">Kanal:</span>
<span class="t ms" style="left:123.77px;top:792.10px;font-size:19px;color:#000;transform:scaleX(0.8270)">Min:</span>
<span class="t ms" style="left:237.57px;top:792.10px;font-size:19px;color:#000;transform:scaleX(0.8272)">Mitt:</span>
<span class="t ms" style="left:348.46px;top:792.10px;font-size:19px;color:#000;transform:scaleX(0.8356)">Max:</span>
<span class="t ms" style="left:418.40px;top:792.10px;font-size:19px;color:#000;transform:scaleX(0.8242)">Cursor: « 00:01:08 (-10,0)</span>
<span class="t ms" style="left:22.17px;top:818.90px;font-size:19px;color:#000;transform:scaleX(0.6333)">1</span>
<span class="t ms" style="left:52.76px;top:818.90px;font-size:19px;color:#000;transform:scaleX(0.8357)">M</span>
<span class="t ms" style="left:102.10px;top:818.90px;font-size:19px;color:#000;transform:scaleX(0.8445)">204,05</span>
<span class="t ms" style="left:216.00px;top:818.90px;font-size:19px;color:#000;transform:scaleX(0.8445)">235,78</span>
<span class="t ms" style="left:329.90px;top:818.90px;font-size:19px;color:#000;transform:scaleX(0.8428)">238,46</span>
<span class="t ms" style="left:442.50px;top:818.90px;font-size:19px;color:#000;transform:scaleX(0.8445)">204,05</span>
<span class="t ms" style="left:559.10px;top:818.90px;font-size:19px;color:#000;transform:scaleX(0.8428)">238,46</span>
<span class="t ms" style="left:621.70px;top:818.90px;font-size:19px;color:#000;transform:scaleX(0.8556)">W</span>
<span class="t ms" style="left:700.40px;top:818.90px;font-size:19px;color:#000;transform:scaleX(0.8150)">034,41</span>
<span class="t " style="left:1072.86px;top:970.64px;font-size:18.3px;color:#111;transform:scaleX(0.9377)">METRAHit Starline-Seri</span>
</body></html>
